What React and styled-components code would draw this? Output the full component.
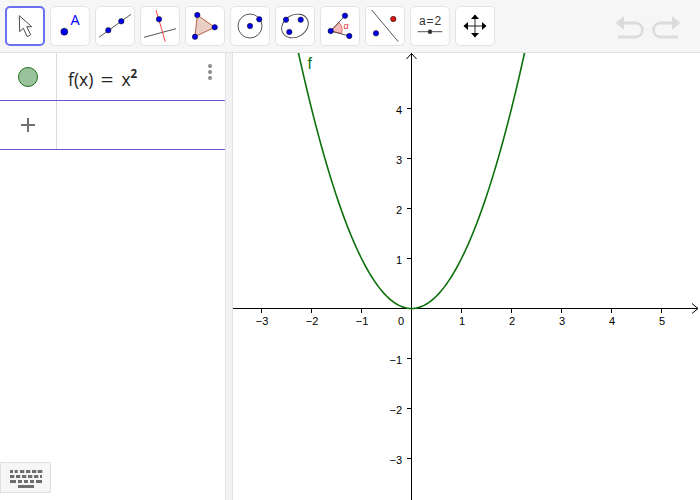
import React from "react";
import styled, { createGlobalStyle } from "styled-components";

const GlobalStyle = createGlobalStyle`
  html, body {
    margin: 0;
    padding: 0;
    height: 100%;
    background: #fff;
    overflow: hidden;
  }
  #root {
    height: 100%;
  }
`;

const Page = styled.div`
  position: relative;
  display: flex;
  flex-direction: column;
  height: 100vh;
  font-family: "Liberation Sans", Arial, sans-serif;
  overflow: hidden;
`;

const Toolbar = styled.div`
  display: flex;
  align-items: flex-start;
  gap: 5px;
  height: 53px;
  box-sizing: border-box;
  padding: 6px 0 0 5px;
  background: #f6f6f6;
  border-bottom: 1px solid #e0e0e0;
  flex: none;
`;

const ToolButton = styled.div`
  width: 40px;
  height: 40px;
  box-sizing: border-box;
  border-radius: 5px;
  background: #fff;
  border: ${({ $active }) => ($active ? "2px solid #6c70f2" : "1px solid #e3e3e3")};
  flex: none;
  position: relative;
  svg {
    position: absolute;
    left: ${({ $active }) => ($active ? "-2px" : "-1px")};
    top: ${({ $active }) => ($active ? "-2px" : "-1px")};
    display: block;
  }
`;

const UndoGroup = styled.div`
  display: flex;
  gap: 8px;
  margin-left: auto;
  margin-right: 19px;
  padding-top: 9px;
  svg {
    display: block;
  }
`;

const Main = styled.div`
  flex: 1;
  display: flex;
  min-height: 0;
`;

const AlgebraPanel = styled.div`
  width: 225px;
  flex: none;
  background: #fff;
`;

const AlgebraRow = styled.div`
  display: flex;
  height: ${({ $height }) => $height}px;
  box-sizing: border-box;
  border-bottom: 1px solid #6557d2;
`;

const MarbleCell = styled.div`
  width: 57px;
  flex: none;
  box-sizing: border-box;
  border-right: 1px solid #dcdcdc;
  display: flex;
  align-items: center;
  justify-content: center;
`;

const Marble = styled.div`
  width: 20px;
  height: 20px;
  box-sizing: border-box;
  border-radius: 50%;
  background: #9bc39b;
  border: 1px solid #1c701c;
`;

const Formula = styled.div`
  flex: 1;
  display: flex;
  align-items: center;
  padding: 4px 0 0 11px;
  font-family: "Open Sans", sans-serif;
  font-size: 17.5px;
  color: #222;
  white-space: pre;
`;

const Sup = styled.span`
  font-size: 11.5px;
  font-weight: 700;
  position: relative;
  top: -5px;
`;

const Equals = styled.span`
  display: inline-block;
  margin: 0 9px;
  transform: scaleX(1.3);
`;

const DotsMenu = styled.div`
  width: 30px;
  flex: none;
  display: flex;
  flex-direction: column;
  align-items: center;
  gap: 2px;
  padding-top: 11px;
`;

const Dot = styled.span`
  width: 4px;
  height: 4px;
  border-radius: 50%;
  background: #8a8a8a;
`;

const Splitter = styled.div`
  width: 8px;
  flex: none;
  box-sizing: border-box;
  background: #f3f3f3;
  border-left: 1px solid #e2e2e2;
  border-right: 1px solid #e2e2e2;
`;

const GraphPane = styled.div`
  flex: 1;
  min-width: 0;
  background: #fff;
  svg {
    display: block;
  }
`;

const KeyboardButton = styled.div`
  position: absolute;
  left: 0;
  bottom: 7px;
  width: 51px;
  height: 31px;
  box-sizing: border-box;
  padding-top: 3px;
  background: #f6f6f6;
  border: 1px solid #e0e0e0;
  display: flex;
  align-items: center;
  justify-content: center;
  svg {
    display: block;
  }
`;

// blue construction point, the same in nearly every tool icon
const Pt = ({ x, y, r = 2.7, fill = "#0000f0" }) => (
  <circle cx={x} cy={y} r={r} fill={fill} stroke="#1a1a1a" strokeWidth="0.6" />
);

const Icon = ({ children }) => (
  <svg width="40" height="40" viewBox="0 0 40 40">
    {children}
  </svg>
);

const tools = [
  <Icon key="move">
    <path
      d="M14.3 9.7 14.7 25.7 18.3 22.3 22.3 30.7 25.7 28.7 21.7 20.7 26.7 20.7Z"
      fill="#fff"
      stroke="#4a4a4a"
      strokeWidth="1"
      strokeLinejoin="round"
    />
  </Icon>,
  <Icon key="point">
    <Pt x={14.3} y={25.7} r={3.5} />
    <text x={20.5} y={19} fontFamily="Open Sans, sans-serif" fontSize="14.5" fill="#0000ff">
      A
    </text>
  </Icon>,
  <Icon key="line">
    <line x1="4" y1="31.3" x2="36" y2="8.3" stroke="#444" strokeWidth="0.9" />
    <Pt x={13.3} y={24.3} />
    <Pt x={26.3} y={15.3} />
  </Icon>,
  <Icon key="perp">
    <line x1="4" y1="31.3" x2="36" y2="22.7" stroke="#444" strokeWidth="0.9" />
    <line x1="16" y1="4" x2="25.3" y2="35.7" stroke="#f03030" strokeWidth="0.9" />
    <Pt x={19} y={13.3} />
  </Icon>,
  <Icon key="polygon">
    <path d="M12.3 9 29.7 21.3 10 30.7Z" fill="#eacfc4" stroke="#b5634a" strokeWidth="1" />
    <Pt x={12.3} y={9} />
    <Pt x={29.7} y={21.3} />
    <Pt x={10} y={30.7} />
  </Icon>,
  <Icon key="circle">
    <circle cx="20" cy="20" r="12" fill="none" stroke="#444" strokeWidth="0.9" />
    <Pt x={20} y={20} />
    <Pt x={29.3} y={13.3} />
  </Icon>,
  <Icon key="ellipse">
    <ellipse
      cx="20"
      cy="20"
      rx="14"
      ry="11"
      transform="rotate(-30 20 20)"
      fill="none"
      stroke="#444"
      strokeWidth="0.9"
    />
    <Pt x={11} y={13.7} />
    <Pt x={25.7} y={13.7} />
    <Pt x={14.3} y={26} />
  </Icon>,
  <Icon key="angle">
    <path d="M10.7 25 19 16.5A11 11 0 0 1 21.5 27.5Z" fill="#f6bcbc" stroke="#e05050" strokeWidth="0.8" />
    <line x1="10.7" y1="25" x2="25" y2="9.7" stroke="#444" strokeWidth="0.9" />
    <line x1="10.7" y1="25" x2="29.3" y2="30" stroke="#444" strokeWidth="0.9" />
    <Pt x={10.7} y={25} />
    <Pt x={25} y={9.7} />
    <Pt x={29.3} y={30} />
    <text x={23.5} y={22.5} fontFamily="Liberation Sans, sans-serif" fontSize="9" fill="#e83030">
      α
    </text>
  </Icon>,
  <Icon key="reflect">
    <line x1="6.7" y1="4" x2="33.3" y2="35.7" stroke="#444" strokeWidth="0.9" />
    <Pt x={11} y={27.3} />
    <Pt x={28.3} y={13} fill="#e01010" />
  </Icon>,
  <Icon key="slider">
    <text
      x="20"
      y="19"
      textAnchor="middle"
      fontFamily="Liberation Sans, sans-serif"
      fontSize="12"
      wordSpacing="-2.4"
      fill="#333"
    >
      a = 2
    </text>
    <line x1="7.7" y1="25.7" x2="32.3" y2="25.7" stroke="#555" strokeWidth="1" />
    <circle cx="20" cy="25.7" r="2.2" fill="#333" />
  </Icon>,
  <Icon key="pan">
    <path d="M20 9V31M9 20H31" stroke="#222" strokeWidth="1" />
    <path
      d="M20 8.5 24 13H16ZM20 31.5 24 27H16ZM8.5 20 13 16V24ZM31.5 20 27 16V24Z"
      fill="#000"
    />
  </Icon>,
];

const GREEN = "#0c700c";

const Axes = () => {
  const xTicks = [-3, -2, -1, 1, 2, 3, 4, 5];
  const yTicks = [4, 3, 2, 1, -1, -2, -3];
  const curve = [];
  for (let px = -2.3; px <= 2.3001; px += 0.05) {
    curve.push(`${411.5 + px * 50},${308.5 - px * px * 50}`);
  }
  return (
    <svg width="467" height="447" viewBox="233 53 467 447" fontFamily="Liberation Sans, sans-serif">
      <line x1="233" y1="308.5" x2="698" y2="308.5" stroke="#000" />
      <path d="M692 303.5 698 308.5 692 313.5" fill="none" stroke="#000" />
      <line x1="411.5" y1="53" x2="411.5" y2="500" stroke="#000" />
      <path d="M406.5 59 411.5 53.5 416.5 59" fill="none" stroke="#000" />
      {xTicks.map((t) => (
        <g key={t}>
          <line x1={411.5 + t * 50} y1="309" x2={411.5 + t * 50} y2="313" stroke="#000" />
          <text x={412 + t * 50} y="325" textAnchor="middle" fontSize="11" fill="#000">
            {t < 0 ? `\u2212${-t}` : t}
          </text>
        </g>
      ))}
      {yTicks.map((t) => (
        <g key={t}>
          <line x1="407" y1={308.5 - t * 50} x2="411" y2={308.5 - t * 50} stroke="#000" />
          <text x="402" y={309.5 - t * 50 + 4} textAnchor="end" fontSize="11" fill="#000">
            {t < 0 ? `\u2212${-t}` : t}
          </text>
        </g>
      ))}
      <text x="401" y="325" textAnchor="middle" fontSize="11" fill="#000">
        0
      </text>
      <polyline points={curve.join(" ")} fill="none" stroke={GREEN} strokeWidth="1.6" />
      <text x="307.5" y="69" fontSize="16" fill={GREEN}>
        f
      </text>
    </svg>
  );
};

// [x, width] of each key, row by row
const keyRows = [
  [[9, 3], [13.7, 3], [19, 4.3], [25, 4.3], [31, 4.3], [36.7, 4.6]],
  [[9, 4.3], [15, 4.3], [21, 4.3], [27, 4.3], [33, 4.3], [39, 2]],
  [[9, 6], [17, 4], [23, 4], [29, 4], [35, 6]],
  [[17, 16]],
];

const App = () => (
  <Page>
    <GlobalStyle />
    <Toolbar>
      {tools.map((icon, i) => (
        <ToolButton key={i} $active={i === 0}>
          {icon}
        </ToolButton>
      ))}
      <UndoGroup>
        <svg width="29" height="24" viewBox="0 0 29 24">
          <path d="M0.5 8 9 1V15Z" fill="#dcdcdc" />
          <path d="M7 8H20C30 8 30 22 20 22H3" fill="none" stroke="#dcdcdc" strokeWidth="2.8" />
        </svg>
        <svg width="29" height="24" viewBox="0 0 29 24">
          <path d="M28.5 8 20 1V15Z" fill="#dcdcdc" />
          <path d="M22 8H9C-1 8 -1 22 9 22H26" fill="none" stroke="#dcdcdc" strokeWidth="2.8" />
        </svg>
      </UndoGroup>
    </Toolbar>
    <Main>
      <AlgebraPanel>
        <AlgebraRow $height={48}>
          <MarbleCell>
            <Marble />
          </MarbleCell>
          <Formula>
            f(x)
            <Equals>=</Equals>
            x<Sup>2</Sup>
          </Formula>
          <DotsMenu>
            <Dot />
            <Dot />
            <Dot />
          </DotsMenu>
        </AlgebraRow>
        <AlgebraRow $height={49}>
          <MarbleCell>
            <svg width="16" height="16" viewBox="0 0 16 16">
              <path d="M8 1V15M1 8H15" stroke="#707070" strokeWidth="2" />
            </svg>
          </MarbleCell>
        </AlgebraRow>
      </AlgebraPanel>
      <Splitter />
      <GraphPane>
        <Axes />
      </GraphPane>
    </Main>
    <KeyboardButton>
      <svg width="34" height="18" viewBox="8 0 34 18">
        {keyRows.map((row, r) =>
          row.map(([x, w]) => (
            <rect key={`${r}-${x}`} x={x} y={r * 5} width={w} height="3" fill="#6e6e6e" />
          ))
        )}
      </svg>
    </KeyboardButton>
  </Page>
);

export default App;
